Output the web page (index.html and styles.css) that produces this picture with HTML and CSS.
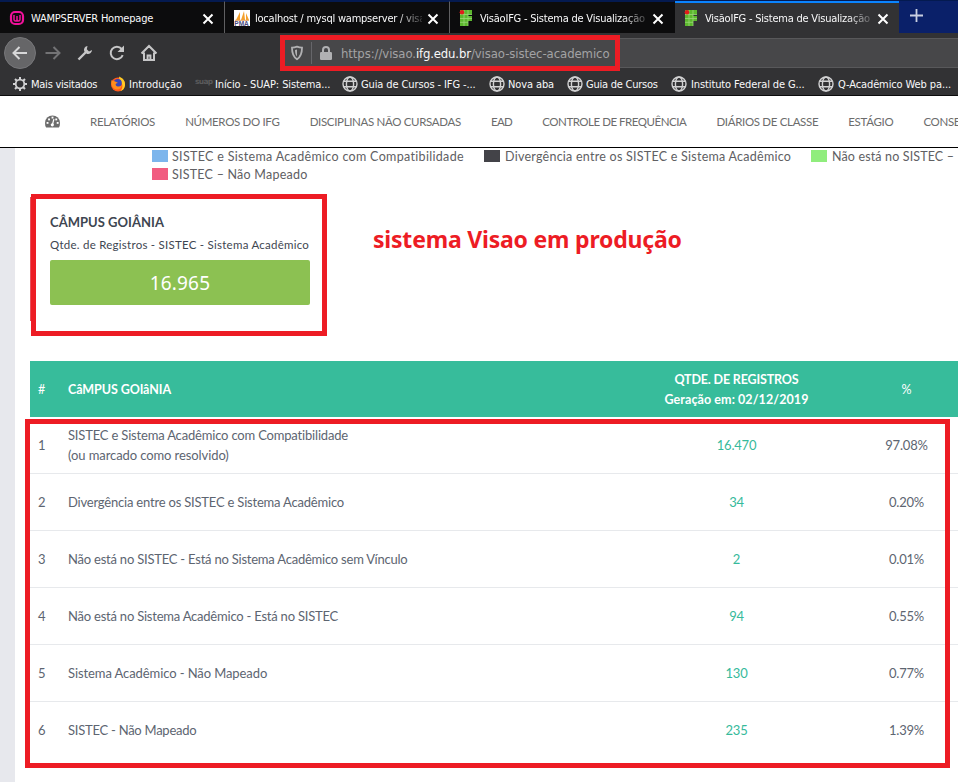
FILE: index.html
```html
<!DOCTYPE html>
<html lang="pt-BR">
<head>
<meta charset="utf-8">
<title>VisãoIFG - Sistema de Visualização</title>
<link rel="stylesheet" href="styles.css">
</head>
<body>
<svg class="defs" width="0" height="0">
  <symbol id="close" viewBox="0 0 12 12"><path d="M1.500 1.500l9 9M10.500 1.500l-9 9" stroke="#fff" stroke-width="2" fill="none"/></symbol>
  <symbol id="globe" viewBox="0 0 16 16"><g fill="none" stroke="#d2d2d3" stroke-width="1.400"><circle cx="8" cy="8" r="7"/><ellipse cx="8" cy="8" rx="3.600" ry="7"/><path d="M1.800 5.300h12.400M1.800 10.700h12.400"/></g></symbol>
  <symbol id="ifg" viewBox="0 0 16 16"><path d="M1 0h12v4.500H9V6h4v5H9v5H1z" fill="#5cb82e"/><path d="M5 0v16M9 0v16M1 4.500h12M1 8.500h12M1 12.300h8" stroke="#9ad777" stroke-width=".8" fill="none"/><circle cx="3" cy="2.300" r="2.300" fill="#e21b1b"/></symbol>
</svg>

<header class="browser">
  <div class="tabs">
    <div class="tab">
      <svg class="fav" viewBox="0 0 16 16"><rect x="2" y="2" width="12" height="12" rx="4" fill="none" stroke="#f0119b" stroke-width="2.200"/><path d="M5 5v4.500q0 1.500 1.500 1.500T8 9.500V6v3.500Q8 11 9.500 11T11 9.500V5" fill="none" stroke="#f0119b" stroke-width="1.500"/></svg>
      <span class="title first">WAMPSERVER Homepage</span><svg class="x"><use href="#close"/></svg>
    </div>
    <div class="tab">
      <svg class="fav" viewBox="0 0 16 16"><path fill="#fff" d="M0 0h16v16H0z"/><path d="M2 10L6 2v8zM7 10l3-9 1 9zM12 10V3l3 7z" fill="#f4a02c"/><path d="M1 10.300h14" stroke="#e0a060"/><text x="0.300" y="15.800" class="pma">PMA</text></svg>
      <span class="title fade">localhost / mysql wampserver / visao</span><svg class="x"><use href="#close"/></svg>
    </div>
    <div class="tab">
      <svg class="fav"><use href="#ifg"/></svg>
      <span class="title fade">VisãoIFG - Sistema de Visualização</span><svg class="x"><use href="#close"/></svg>
    </div>
    <div class="tab active">
      <svg class="fav"><use href="#ifg"/></svg>
      <span class="title fade">VisãoIFG - Sistema de Visualização</span><svg class="x"><use href="#close"/></svg>
    </div>
    <div class="newtab"><svg width="15" height="15" viewBox="0 0 15 15"><path d="M7.500 1v13M1 7.500h13" stroke="#c9cfe2" stroke-width="1.800"/></svg></div>
  </div>

  <div class="toolbar">
    <div class="buttons">
      <span class="back"><svg viewBox="0 0 18 18"><path d="M16 9H3M8.500 3L2.500 9l6 6" stroke="#d8d8d9"/></svg></span>
      <svg viewBox="0 0 18 18"><path d="M1.500 9H15M9.500 3l6 6-6 6" stroke="#737375"/></svg>
      <svg viewBox="0 0 18 18"><path d="M2.500 15.500L10 8" stroke="#c6c6c7" stroke-width="2.400"/><path d="M11.500 2a4 4 0 0 0-3.300 5.300L10.700 9.800A4 4 0 0 0 16 6l-3 1.500L10.800 5.300z" fill="#c6c6c7" stroke="none"/></svg>
      <svg viewBox="0 0 18 18"><path d="M14.700 11.200A6.200 6.200 0 1 1 13.700 5" stroke="#c6c6c7"/><path d="M16 1.500V8H9.500z" fill="#c6c6c7" stroke="none"/></svg>
      <svg viewBox="0 0 18 18"><path d="M1.500 9.500L9 2l7.500 7.500M4 8.500V16h10V8.500M7.600 16v-4.500h2.800V16" stroke="#c6c6c7"/></svg>
    </div>
    <div class="url">
      <svg class="shield" viewBox="0 0 14 16"><path d="M7 1.700c2 .8 3.800 1 5 1 0 6-1 9-5 11.600C3 11.700 2 8.700 2 2.700c1.200 0 3-.2 5-1z" fill="none" stroke="#b1b1b3" stroke-width="1.800"/><path d="M7 4.500v7c-1.500-1.500-2-3.500-2-6.500z" fill="#b1b1b3"/></svg>
      <span class="bar"></span>
      <svg class="lock" viewBox="0 0 12 14"><path d="M3 6.500V4a3 3 0 0 1 6 0v2.500" fill="none" stroke="#b1b1b3" stroke-width="2"/><rect y="6" width="12" height="8" rx="1.200" fill="#b1b1b3"/></svg>
      <span class="address">https://visao.<b>ifg.edu.br</b>/visao-sistec-academico</span>
    </div>
  </div>

  <nav class="bookmarks">
    <span class="bm w99 tight"><svg viewBox="0 0 16 16"><circle cx="8" cy="8" r="4.300" fill="none" stroke="#d2d2d3" stroke-width="1.800"/><path d="M8 1v2.500M8 12.500V15M1 8h2.500M12.500 8H15M3 3l2 2M11 11l2 2M3 13l2-2M11 5l2-2" stroke="#d2d2d3" stroke-width="2"/></svg>Mais visitados</span>
    <span class="bm w84 wide"><svg viewBox="0 0 16 16"><circle cx="8" cy="8.500" r="7" fill="#ff5a1c"/><path d="M9 .5c4 1.500 6.500 4.500 6 9-.5 3-2 4.800-4.500 5.700 3-4 2.500-8-1-10z" fill="#ffcb24"/><circle cx="7.800" cy="7" r="4" fill="#3545b8"/><path d="M1.500 4C3 5.500 6 5 8 7c-2 0-3 1-2 2.500s4 1.500 5.500-.5c0 3-2 4.500-4.500 4.500C3 13.500.5 9 1.500 4z" fill="#ff8c1a"/></svg>Introdução</span>
    <span class="bm w147"><span class="suap">suap</span>Início - SUAP: Sistema...</span>
    <span class="bm w147"><svg><use href="#globe"/></svg>Guia de Cursos - IFG -...</span>
    <span class="bm w78"><svg><use href="#globe"/></svg>Nova aba</span>
    <span class="bm w104 tight"><svg><use href="#globe"/></svg>Guia de Cursos</span>
    <span class="bm w147 far"><svg><use href="#globe"/></svg>Instituto Federal de G...</span>
    <span class="bm far"><svg><use href="#globe"/></svg>Q-Acadêmico Web pa...</span>
  </nav>
</header>

<nav class="menu">
  <svg class="dash" viewBox="0 0 16 13"><path d="M8 0a8 8 0 0 0-8 8q0 3 1.200 5h13.600Q16 11 16 8a8 8 0 0 0-8-8z" fill="#6c6c6c"/><g fill="#fff"><rect x="1.700" y="7" width="2" height="2"/><rect x="3.300" y="3.300" width="2" height="2"/><rect x="7" y="1.300" width="2" height="2"/><rect x="11" y="3.300" width="2" height="2"/><rect x="12.500" y="7" width="2" height="2"/></g><path d="M9.500 4L8 9.500" stroke="#fff" stroke-width="1.300"/><circle cx="7.800" cy="10" r="1.700" fill="#fff"/></svg>
  <a>RELATÓRIOS</a><a>NÚMEROS DO IFG</a><a>DISCIPLINAS NÃO CURSADAS</a><a class="ead">EAD</a><a class="freq">CONTROLE DE FREQUÊNCIA</a><a>DIÁRIOS DE CLASSE</a><a>ESTÁGIO</a><a>CONSE</a>
</nav>

<main class="page">
  <div class="legend">
    <div class="lrow">
      <span class="li one"><i class="blue"></i>SISTEC e Sistema Acadêmico com Compatibilidade</span>
      <span class="li two"><i class="dark"></i>Divergência entre os SISTEC e Sistema Acadêmico</span>
      <span class="li three"><i class="lime"></i>Não está no SISTEC –</span>
    </div>
    <div class="lrow"><span class="li four"><i class="pink"></i>SISTEC – Não Mapeado</span></div>
  </div>

  <div class="summary">
    <section class="card">
      <h2>CÂMPUS GOIÂNIA</h2>
      <p>Qtde. de Registros - SISTEC - Sistema Acadêmico</p>
      <div class="total">16.965</div>
    </section>
    <strong class="note">sistema Visao em produção</strong>
  </div>

  <div class="table">
    <div class="tr head"><span>#</span><span class="name">CâMPUS GOIâNIA</span><span class="qty"><span class="q1">QTDE. DE REGISTROS</span><br><span class="q2">Geração em: 02/12/2019</span></span><span class="pct">%</span></div>
    <div class="tr"><span>1</span><span class="name"><span class="n1">SISTEC e Sistema Acadêmico com Compatibilidade</span><br><span class="n0">(ou marcado como resolvido)</span></span><span class="qty">16.470</span><span class="pct">97.08%</span></div>
    <div class="tr"><span>2</span><span class="name">Divergência entre os SISTEC e Sistema Acadêmico</span><span class="qty">34</span><span class="pct">0.20%</span></div>
    <div class="tr"><span>3</span><span class="name n3">Não está no SISTEC - Está no Sistema Acadêmico sem Vínculo</span><span class="qty">2</span><span class="pct">0.01%</span></div>
    <div class="tr"><span>4</span><span class="name n3">Não está no Sistema Acadêmico - Está no SISTEC</span><span class="qty">94</span><span class="pct">0.55%</span></div>
    <div class="tr"><span>5</span><span class="name n0">Sistema Acadêmico - Não Mapeado</span><span class="qty">130</span><span class="pct">0.77%</span></div>
    <div class="tr"><span>6</span><span class="name n6">SISTEC - Não Mapeado</span><span class="qty">235</span><span class="pct">1.39%</span></div>
  </div>
</main>

<div class="mark mark-url"></div>
<div class="mark mark-card"></div>
<div class="mark mark-table"></div>
</body>
</html>
```
FILE: styles.css
```css
* { box-sizing: border-box; }
body { margin: 0; width: 958px; height: 782px; overflow: hidden; position: relative; background: #fff; font-family: Lato, sans-serif; }
.defs { position: absolute; }

/* Browser chrome */
.browser { height: 96px; background: #323234; border-bottom: 1px solid #0c0c0d; color: #f9f9fa; font: 11px "DejaVu Sans Condensed", "DejaVu Sans", sans-serif; font-stretch: condensed; }
.tabs { display: flex; height: 33px; background: #0a2069; border-top: 1px solid #041a50; }
.tab { width: 225px; height: 32px; padding: 1px 11px 0 9px; display: flex; align-items: center; background: #0c0c0d; border-right: 1px solid #5f5f61; border-top: 1px solid #041a50; letter-spacing: -.22px; }
.tab:nth-child(3) { border-right-color: #0c0c0d; }
.tab.active { width: 224px; background: #323234; border-top: 2px solid #0a84ff; border-right: 0; padding-top: 0; padding-right: 10px; }
.fav { width: 16px; height: 16px; flex: none; }
.pma { font: bold 6.5px "Liberation Sans", sans-serif; fill: #4a4a80; letter-spacing: 0; }
.title { margin: 1px 0 0 5px; width: 167px; flex: none; overflow: hidden; white-space: nowrap; line-height: 16px; }
.title.first { margin-left: 6px; width: 166px; }
.title.fade { -webkit-mask-image: linear-gradient(to right, #000 142px, transparent 172px); mask-image: linear-gradient(to right, #000 142px, transparent 172px); }
.x { width: 12px; height: 12px; margin: 1px 0 0 5px; flex: none; }
.newtab { padding: 7px 0 0 10px; }

.toolbar { display: flex; height: 39px; }
.buttons { display: flex; align-items: center; width: 283px; padding: 1px 0 0 4px; }
.buttons svg { width: 18px; height: 18px; margin-right: 14px; fill: none; stroke-width: 2; }
.back { width: 32px; height: 32px; margin-right: 8px; border-radius: 50%; background: #666668; border: 1px solid #77777a; display: grid; place-items: center; }
.buttons .back svg { margin: 0; }
.url { flex: 1; height: 30px; margin-top: 5px; display: flex; align-items: center; background: #474749; border: 1px solid #58585a; border-right: 0; padding-left: 6px; }
.shield { width: 14px; height: 16px; }
.bar { width: 1px; height: 22px; margin: 0 8px 0 7px; background: #66666a; }
.lock { width: 12px; height: 14px; }
.address { margin-left: 9px; font-size: 13px; color: #a3a3a5; letter-spacing: -.08px; white-space: nowrap; }
.address b { font-weight: 400; color: #f9f9fa; letter-spacing: -.15px; }

.bookmarks { display: flex; height: 24px; padding-left: 12px; }
.bm { display: flex; align-items: center; flex: none; white-space: nowrap; letter-spacing: -.11px; }
.bm svg { width: 16px; height: 16px; margin: -1px 3px 0 0; }
.bm.far svg { margin-right: 4px; }
.bm.tight { letter-spacing: -.24px; }
.bm.wide { letter-spacing: 0; }
.suap { width: 20px; font: bold 7.5px "DejaVu Sans", sans-serif; color: #5a5a5c; letter-spacing: -.7px; margin-top: -6px; }
.w99 { width: 98px; } .w84 { width: 85px; } .w147 { width: 147px; } .w78 { width: 78px; } .w104 { width: 104px; }

/* Site menu */
.menu { display: flex; align-items: center; height: 52px; padding-left: 45px; border-bottom: 1px solid #000; font-size: 11.5px; letter-spacing: -.33px; color: #6c6c6c; white-space: nowrap; }
.menu a { margin-left: 30.1px; line-height: 16px; }
.dash { width: 15px; height: 13px; flex: none; }
.menu .ead { letter-spacing: -.65px; }
.menu .freq { letter-spacing: -.47px; }

/* Page */
.page { height: 634px; border-left: 15px solid #e7e8ed; overflow: hidden; }
.legend { height: 46px; padding-left: 137px; font-size: 12.5px; color: #606063; }
.lrow { display: flex; height: 18px; }
.li { display: flex; align-items: center; white-space: nowrap; flex: none; line-height: 18px; letter-spacing: .23px; }
.li i { width: 16px; height: 12px; margin-right: 4px; margin-top: -2px; }
.one { width: 332px; letter-spacing: .32px; }
.two { width: 327px; letter-spacing: .25px; }
.three { letter-spacing: .14px; }
.two i, .three i { margin-right: 5px; }
.blue { background: #7cb5ec; } .dark { background: #434348; } .lime { background: #90ed7d; } .pink { background: #f15c80; }

.summary { display: flex; height: 167px; padding: 3px 0 44px 15px; }
.card { width: 297px; height: 124px; border-left: 1px solid #e7505a; padding: 16px 17px 0 19px; color: #3e4651; }
.card h2 { margin: 0; font-size: 13px; line-height: 18px; letter-spacing: .03px; }
.card p { margin: 6px 0 7px; font-size: 11.5px; line-height: 16px; letter-spacing: .25px; white-space: nowrap; }
.total { width: 260px; height: 45px; padding-top: 1px; border-radius: 2px; background: #8cc152; color: #fff; font: 19px/45px "Noto Sans", sans-serif; text-align: center; letter-spacing: .15px; }
.note { margin: 26px 0 0 46px; color: #ed1c24; font: bold 23px/32px "Noto Sans", sans-serif; letter-spacing: -.2px; white-space: nowrap; }

.table { margin-left: 15px; width: 943px; font-size: 13px; line-height: 20px; color: #5d6571; }
.tr { display: grid; grid-template-columns: 38px 532px 273px 67px; align-items: center; height: 57px; border-bottom: 1px solid #e7e9ec; letter-spacing: -.2px; }
.tr > :first-child { padding-left: 8px; }
.tr:last-child { height: 56px; border-bottom: 0; }
.qty { text-align: center; color: #36ba9b; }
.pct { text-align: center; }
.n0 { letter-spacing: -.09px; }
.n1 { letter-spacing: -.18px; }
.n3 { letter-spacing: -.22px; }
.n6 { letter-spacing: -.25px; }
.head { height: 56px; padding-top: 2px; background: #37bc9b; color: #fff; font-size: 12.5px; border: 0; }
.head .name, .head .qty { font-weight: 700; color: #fff; }
.head .name { letter-spacing: -.08px; }
.q1 { letter-spacing: -.15px; }
.q2 { letter-spacing: .08px; }

/* Highlight frames drawn over the page */
.mark { position: absolute; border: 5px solid #ed1c24; }
.mark-url { left: 280px; top: 35px; width: 340px; height: 36px; }
.mark-card { left: 31px; top: 194px; width: 296px; height: 142px; }
.mark-table { left: 25px; top: 419px; width: 925px; height: 349px; }
```
